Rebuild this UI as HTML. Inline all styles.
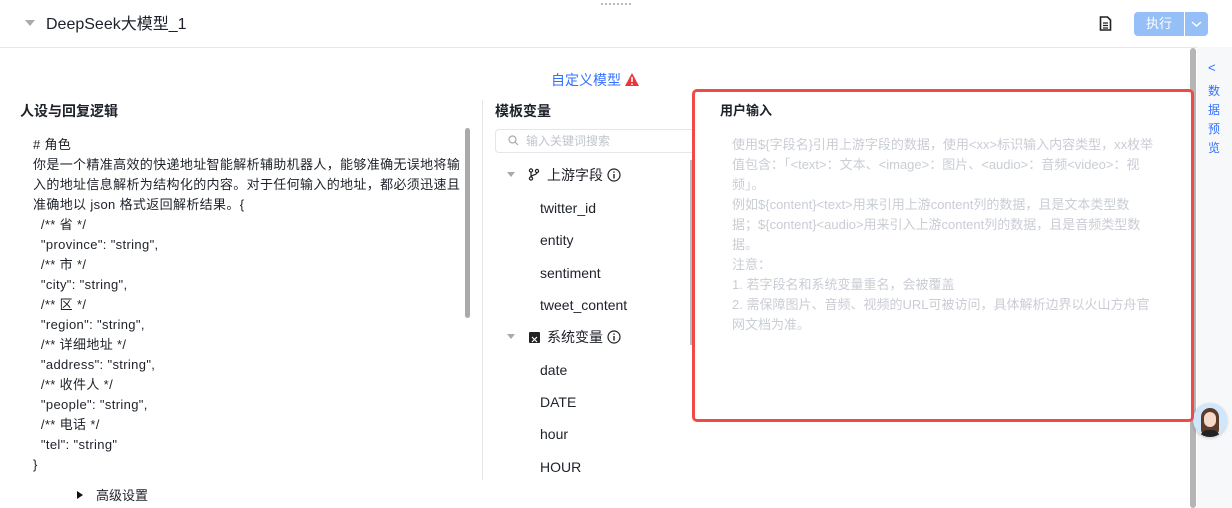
<!DOCTYPE html>
<html><head><meta charset="utf-8"><style>
*{margin:0;padding:0;box-sizing:border-box}
body{width:1232px;height:508px;overflow:hidden;background:#fff;font-family:"Liberation Sans","Noto Sans CJK SC",sans-serif;color:#1d2129;position:relative}
.a{position:absolute;white-space:nowrap}
.lt div{height:20px;line-height:20px;font-size:13px;letter-spacing:0.35px;color:#1d2129}
.rt div{height:20px;line-height:20px;font-size:13px;color:#c9cdd4}
.mi{position:absolute;left:540px;font-size:14px;color:#1d2129;line-height:20px}
</style></head><body>
<div class="a" style="left:601px;top:3px;width:30px;height:3px;border-top:2px dotted #bbb"></div>
<div class="a" style="left:25px;top:20px;width:0;height:0;border-left:5px solid transparent;border-right:5px solid transparent;border-top:6px solid #aaa"></div>
<div class="a" style="left:46px;top:14px;font-size:16px;line-height:22px;color:#1d2129">DeepSeek大模型_1</div>
<svg class="a" style="left:1099px;top:16px" width="13" height="15" viewBox="0 0 13 15"><path d="M1.5 1h7l3 3v10h-10z" fill="none" stroke="#222" stroke-width="1.6"/><path d="M4 7h5M4 9.5h5M4 12h5" stroke="#222" stroke-width="1.2"/></svg>
<div class="a" style="left:1134px;top:12px;width:50px;height:24px;background:#94bff7;border-radius:4px 0 0 4px;color:#fff;font-size:13px;line-height:24px;text-align:center">执行</div>
<div class="a" style="left:1185px;top:12px;width:23px;height:24px;background:#94bff7;border-radius:0 4px 4px 0"><svg width="23" height="24"><path d="M7 10l4.5 4 4.5-4" fill="none" stroke="#fff" stroke-width="1.5"/></svg></div>
<div class="a" style="left:0;top:47px;width:1197px;height:1px;background:#e5e6eb"></div>
<div class="a" style="left:1197px;top:47px;width:35px;height:461px;background:#f7f8fa"></div>
<div class="a" style="left:1190px;top:48px;width:6px;height:460px;background:#b5b5b5;border-radius:3px"></div>
<div class="a" style="left:1208px;top:58px;color:#3370ff;font-size:13px;line-height:20px">&lt;</div>
<div class="a" style="left:1208px;top:82px;color:#3370ff;font-size:12px;line-height:19px;white-space:normal;width:14px">数据预览</div>
<div class="a" style="left:1193px;top:403px;width:34px;height:34px;border-radius:50%;background:#cfe6fb;box-shadow:0 1px 3px rgba(0,0,0,.2);overflow:hidden"><div style="position:absolute;left:8px;top:5px;width:18px;height:26px;border-radius:9px 9px 4px 4px;background:#5a3a2a"></div><div style="position:absolute;left:11px;top:9px;width:12px;height:15px;border-radius:6px;background:#f6d8c8"></div><div style="position:absolute;left:7px;top:27px;width:20px;height:10px;border-radius:8px 8px 0 0;background:#222"></div></div>
<div class="a" style="left:551px;top:70px;color:#3370ff;font-size:14px;line-height:20px">自定义模型</div>
<svg class="a" style="left:624px;top:72px" width="16" height="15"><path d="M8 1l7 13H1z" fill="#e8383c"/><path d="M8 5v5M8 11.5v1.5" stroke="#fff" stroke-width="1.6"/></svg>
<div class="a" style="left:20px;top:101px;font-size:14px;font-weight:bold;line-height:20px">人设与回复逻辑</div>
<div class="a lt" style="left:33px;top:135px">
<div># 角色</div><div>你是一个精准高效的快递地址智能解析辅助机器人，能够准确无误地将输</div><div>入的地址信息解析为结构化的内容。对于任何输入的地址，都必须迅速且</div><div>准确地以 json 格式返回解析结果。{</div>
<div>&nbsp;&nbsp;/** 省 */</div><div>&nbsp;&nbsp;"province": "string",</div><div>&nbsp;&nbsp;/** 市 */</div><div>&nbsp;&nbsp;"city": "string",</div><div>&nbsp;&nbsp;/** 区 */</div><div>&nbsp;&nbsp;"region": "string",</div><div>&nbsp;&nbsp;/** 详细地址 */</div><div>&nbsp;&nbsp;"address": "string",</div><div>&nbsp;&nbsp;/** 收件人 */</div><div>&nbsp;&nbsp;"people": "string",</div><div>&nbsp;&nbsp;/** 电话 */</div><div>&nbsp;&nbsp;"tel": "string"</div><div>}</div></div>
<div class="a" style="left:465px;top:128px;width:5px;height:190px;background:#aaa;border-radius:3px"></div>
<div class="a" style="left:482px;top:100px;width:1px;height:380px;background:#e5e6eb"></div>
<div class="a" style="left:77px;top:491px;width:0;height:0;border-top:4px solid transparent;border-bottom:4px solid transparent;border-left:6px solid #111"></div>
<div class="a" style="left:96px;top:486px;font-size:13px;line-height:20px">高级设置</div>
<div class="a" style="left:495px;top:101px;font-size:14px;font-weight:bold;line-height:20px">模板变量</div>
<div class="a" style="left:495px;top:129px;width:200px;height:24px;border:1px solid #e5e6eb;border-radius:4px"></div>
<svg class="a" style="left:508px;top:135px" width="11" height="11"><circle cx="4.5" cy="4.5" r="3.5" fill="none" stroke="#aaa" stroke-width="1.2"/><path d="M7 7l3 3" stroke="#aaa" stroke-width="1.2"/></svg>
<div class="a" style="left:526px;top:131px;font-size:12px;color:#c0c4cc;line-height:20px">输入关键词搜索</div>
<div class="a" style="left:507px;top:172px;border-left:4px solid transparent;border-right:4px solid transparent;border-top:5px solid #aaa"></div>
<svg class="a" style="left:528px;top:168px" width="12" height="13"><circle cx="3" cy="2.5" r="1.6" fill="none" stroke="#222" stroke-width="1.2"/><circle cx="3" cy="10.5" r="1.6" fill="none" stroke="#222" stroke-width="1.2"/><circle cx="9" cy="3" r="1.6" fill="none" stroke="#222" stroke-width="1.2"/><path d="M3 4v5M9 4.5c0 3-6 2-6 4.5" fill="none" stroke="#222" stroke-width="1.2"/></svg>
<div class="a" style="left:547px;top:165px;font-size:14px;line-height:20px">上游字段</div>
<svg class="a" style="left:607px;top:168px" width="14" height="14"><circle cx="7" cy="7" r="6" fill="none" stroke="#222" stroke-width="1.2"/><path d="M7 6v4.5M7 3.5v1.3" stroke="#222" stroke-width="1.4"/></svg>
<div class="mi" style="top:198px">twitter_id</div>
<div class="mi" style="top:230px">entity</div>
<div class="mi" style="top:263px">sentiment</div>
<div class="mi" style="top:295px">tweet_content</div>
<div class="a" style="left:507px;top:334px;border-left:4px solid transparent;border-right:4px solid transparent;border-top:5px solid #aaa"></div>
<div class="a" style="left:529px;top:332px;width:11px;height:11px;background:#222;border-radius:1px"><svg width="11" height="11"><path d="M3 3l5 5M8 3l-5 5" stroke="#fff" stroke-width="1.2"/></svg></div>
<div class="a" style="left:547px;top:327px;font-size:14px;line-height:20px">系统变量</div>
<svg class="a" style="left:607px;top:330px" width="14" height="14"><circle cx="7" cy="7" r="6" fill="none" stroke="#222" stroke-width="1.2"/><path d="M7 6v4.5M7 3.5v1.3" stroke="#222" stroke-width="1.4"/></svg>
<div class="mi" style="top:360px">date</div>
<div class="mi" style="top:392px">DATE</div>
<div class="mi" style="top:424px">hour</div>
<div class="mi" style="top:457px">HOUR</div>
<div class="a" style="left:690px;top:160px;width:3px;height:185px;background:#bbb"></div>
<div class="a" style="left:692px;top:89px;width:502px;height:333px;border:3px solid #f04a47;border-radius:5px;background:#fff"></div>
<div class="a" style="left:720px;top:101px;font-size:13px;font-weight:bold;line-height:20px">用户输入</div>
<div class="a rt" style="left:732px;top:135px">
<div>使用${字段名}引用上游字段的数据，使用&lt;xx&gt;标识输入内容类型，xx枚举</div><div>值包含：「&lt;text&gt;：文本、&lt;image&gt;：图片、&lt;audio&gt;：音频&lt;video&gt;：视</div><div>频」。</div><div>例如${content}&lt;text&gt;用来引用上游content列的数据，且是文本类型数</div><div>据；${content}&lt;audio&gt;用来引入上游content列的数据，且是音频类型数</div><div>据。</div><div>注意：</div><div>1. 若字段名和系统变量重名，会被覆盖</div><div>2. 需保障图片、音频、视频的URL可被访问，具体解析边界以火山方舟官</div><div>网文档为准。</div></div>
</body></html>
